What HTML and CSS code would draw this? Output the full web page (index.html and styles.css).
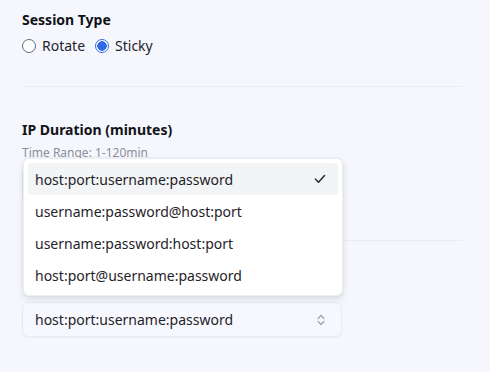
FILE: index.html
```html
<!doctype html>
<html lang="en">

<head>
    <meta charset="UTF-8" />
    <meta name="viewport" content="width=device-width, initial-scale=1.0" />
    <title>Proxy Settings</title>
    <link rel="stylesheet" href="styles.css">
</head>

<body>
    <div class="panel">
        <div class="section">
            <div class="label">Session Type</div>
            <div class="radios">
                <label class="radio"><span class="dot"></span>Rotate</label>
                <label class="radio checked"><span class="dot"></span>Sticky</label>
            </div>
        </div>

        <div class="section">
            <div class="label">IP Duration (minutes)</div>
            <div class="hint">Time Range: 1-120min</div>
            <div class="field"></div>
        </div>

        <div class="section last">
            <div class="label-gap"></div>
            <div class="select-wrap">
                <div class="menu">
                    <div class="item active">host:port:username:password
                        <svg class="check" width="12" height="10" viewBox="0 0 12 10">
                            <path d="M1.5 5.2 L4.5 8.2 L10.5 1.5" fill="none" stroke="#2b2f3a" stroke-width="1.6"
                                stroke-linecap="round" stroke-linejoin="round" />
                        </svg>
                    </div>
                    <div class="item">username:password@host:port</div>
                    <div class="item">username:password:host:port</div>
                    <div class="item">host:port@username:password</div>
                </div>
                <div class="select">
                    <span>host:port:username:password</span>
                    <svg class="updown" width="8" height="12" viewBox="0 0 8 12">
                        <path d="M1 4.5 L4 1.5 L7 4.5 M1 7.5 L4 10.5 L7 7.5" fill="none" stroke="#9aa0ab"
                            stroke-width="1.2" stroke-linecap="round" stroke-linejoin="round" />
                    </svg>
                </div>
            </div>
        </div>
    </div>
</body>

</html>
```

FILE: styles.css
```css
body {
    margin: 0;
    background: #f5f7fd;
    font-family: "Noto Sans", "Open Sans", sans-serif;
    color: #1f2329;
}

.panel {
    padding: 10px 28px 0 22px;
}

.section {
    border-bottom: 1px solid #e9ecf3;
    padding-bottom: 30px;
}

.section + .section {
    padding-top: 33px;
}

.section.last {
    border-bottom: none;
}

.label {
    font-size: 14px;
    font-weight: 700;
    line-height: 20px;
    color: #111318;
}

.label-gap {
    height: 20px;
}

.radios {
    display: flex;
    gap: 10px;
    margin-top: 6px;
    height: 20px;
    align-items: center;
}

.radio {
    display: flex;
    align-items: center;
    gap: 6px;
    font-size: 14px;
    line-height: 20px;
    color: #1f2329;
}

.dot {
    width: 12px;
    height: 12px;
    border: 1px solid #5b6a88;
    border-radius: 50%;
    background: #fff;
    box-sizing: content-box;
}

.radio.checked .dot {
    border-color: #2f6be6;
    background: radial-gradient(circle, #2f6be6 0 4.5px, #fff 5px);
}

.hint {
    margin-top: 5px;
    font-size: 12px;
    line-height: 16px;
    color: #8a8f99;
}

.field {
    margin-top: 6px;
    height: 35px;
    width: 320px;
    box-sizing: border-box;
    border: 1px solid #e6e9f0;
    border-radius: 6px;
    margin-bottom: 8px;
}

.select-wrap {
    position: relative;
    margin-top: 8px;
    width: 320px;
}

.select {
    height: 35px;
    box-sizing: border-box;
    border: 1px solid #e8ebf2;
    border-radius: 6px;
    background: #f7f8fd;
    box-shadow: 0 1px 2px rgba(20, 30, 60, 0.04);
    display: flex;
    align-items: center;
    justify-content: space-between;
    padding: 0 16px 0 12px;
    font-size: 14px;
}

.menu {
    position: absolute;
    left: 1px;
    bottom: calc(100% + 6px);
    width: 320px;
    box-sizing: border-box;
    padding: 4px;
    background: #fff;
    border-radius: 6px;
    border: 1px solid #eceef3;
    box-shadow: 0 3px 6px rgba(20, 30, 60, 0.12), 0 0 2px rgba(20, 30, 60, 0.08);
    z-index: 5;
}

.item {
    height: 32px;
    display: flex;
    align-items: center;
    justify-content: space-between;
    padding: 0 12px 0 7px;
    border-radius: 4px;
    font-size: 14px;
    color: #1f2329;
}

.item.active {
    background: #f3f4f6;
}
```
